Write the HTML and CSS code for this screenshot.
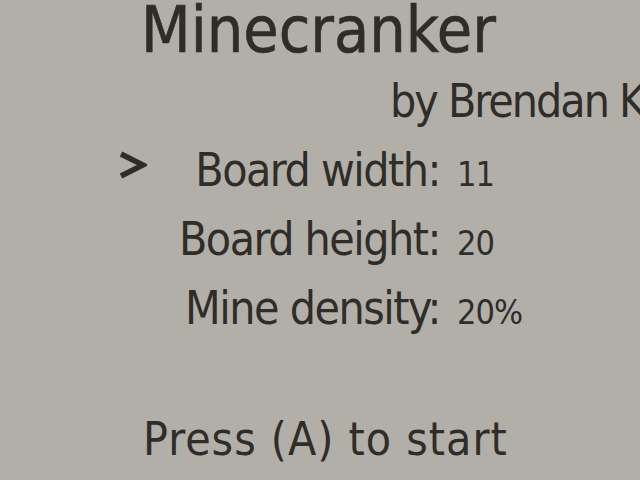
FILE: index.html
```html
<!DOCTYPE html>
<html lang="en">
<head>
    <meta charset="UTF-8">
    <meta name="viewport" content="width=device-width, initial-scale=1.0">
    <title>Minecranker</title>
    <link rel="stylesheet" href="styles.css">
</head>
<body>
    <div class="screen">
        <h1 class="title">Minecranker</h1>
        <div class="byline">by Brendan K</div>

        <div class="options">
            <div class="cursor">
                <svg width="29" height="30" viewBox="0 0 29 30">
                    <polyline points="3,4 25,15 3,26" fill="none" stroke="#2f2d28" stroke-width="5.5" stroke-linejoin="miter"/>
                </svg>
            </div>
            <div class="label">Board width:</div>
            <div class="value">11</div>

            <div></div>
            <div class="label">Board height:</div>
            <div class="value">20</div>

            <div></div>
            <div class="label">Mine density:</div>
            <div class="value">20%</div>
        </div>

        <div class="prompt">Press (A) to start</div>
    </div>
</body>
</html>
```

FILE: styles.css
```css
/* General Styling */
body {
    margin: 0;
    padding: 0;
    background-color: #b2afa9;
    color: #2f2d28;
    font-family: "DejaVu Sans", sans-serif;
    font-stretch: condensed;
    overflow: hidden;
}

.screen {
    width: 640px;
    height: 480px;
    overflow: hidden;
}

/* Title */
.title {
    margin: -2px 0 0 0;
    padding-left: 141px;
    font-size: 64px;
    font-weight: normal;
    line-height: 64px;
    letter-spacing: 0;
    -webkit-text-stroke: 0.6px #2f2d28;
}

.byline {
    margin-top: 5px;
    padding-left: 390px;
    font-size: 46px;
    line-height: 69px;
    letter-spacing: -2px;
    white-space: nowrap;
}

/* Options */
.options {
    display: grid;
    grid-template-columns: 29px 276px auto;
    column-gap: 17px;
    grid-auto-rows: 69px;
    align-items: baseline;
    margin-top: 0;
    padding-left: 118px;
}

.cursor {
    align-self: center;
    margin-bottom: 12px;
}

.cursor svg {
    display: block;
}

.label {
    text-align: right;
    font-size: 46px;
    line-height: 69px;
    letter-spacing: -1.5px;
    white-space: nowrap;
}

.value {
    font-size: 34px;
    line-height: 69px;
    letter-spacing: -1px;
}

/* Start prompt */
.prompt {
    margin-top: 62px;
    padding-left: 143px;
    font-size: 46px;
    line-height: 69px;
    letter-spacing: 1px;
}
```
